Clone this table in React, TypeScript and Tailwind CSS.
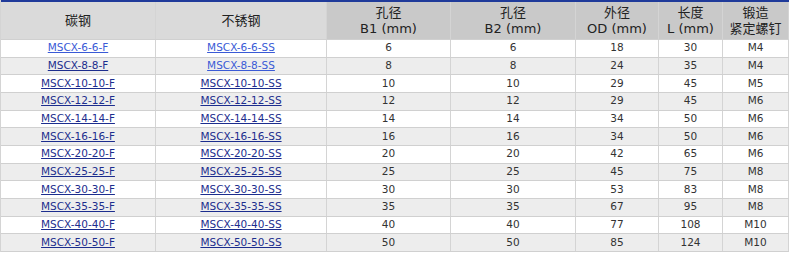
import React from "react";

type Row = {
  f: string;
  ss: string;
  b1: string;
  b2: string;
  od: string;
  l: string;
  m: string;
  fLight?: boolean;
  ssLight?: boolean;
};

const rows: Row[] = [
  { f: "MSCX-6-6-F", ss: "MSCX-6-6-SS", b1: "6", b2: "6", od: "18", l: "30", m: "M4", fLight: true, ssLight: true },
  { f: "MSCX-8-8-F", ss: "MSCX-8-8-SS", b1: "8", b2: "8", od: "24", l: "35", m: "M4", ssLight: true },
  { f: "MSCX-10-10-F", ss: "MSCX-10-10-SS", b1: "10", b2: "10", od: "29", l: "45", m: "M5" },
  { f: "MSCX-12-12-F", ss: "MSCX-12-12-SS", b1: "12", b2: "12", od: "29", l: "45", m: "M6" },
  { f: "MSCX-14-14-F", ss: "MSCX-14-14-SS", b1: "14", b2: "14", od: "34", l: "50", m: "M6" },
  { f: "MSCX-16-16-F", ss: "MSCX-16-16-SS", b1: "16", b2: "16", od: "34", l: "50", m: "M6" },
  { f: "MSCX-20-20-F", ss: "MSCX-20-20-SS", b1: "20", b2: "20", od: "42", l: "65", m: "M6" },
  { f: "MSCX-25-25-F", ss: "MSCX-25-25-SS", b1: "25", b2: "25", od: "45", l: "75", m: "M8" },
  { f: "MSCX-30-30-F", ss: "MSCX-30-30-SS", b1: "30", b2: "30", od: "53", l: "83", m: "M8" },
  { f: "MSCX-35-35-F", ss: "MSCX-35-35-SS", b1: "35", b2: "35", od: "67", l: "95", m: "M8" },
  { f: "MSCX-40-40-F", ss: "MSCX-40-40-SS", b1: "40", b2: "40", od: "77", l: "108", m: "M10" },
  { f: "MSCX-50-50-F", ss: "MSCX-50-50-SS", b1: "50", b2: "50", od: "85", l: "124", m: "M10" },
];

const cols = "grid grid-cols-[155px_171px_124px_125px_83px_64px_66px]";

function HeadCell({ lines, light }: { lines: string[]; light?: boolean }) {
  return (
    <div
      className={`flex flex-col items-center justify-center border-r border-[#d4d4d4] leading-[16px] text-[13px] text-[#222] ${
        light ? "bg-[#dadada]" : "bg-[#c9c9c9]"
      }`}
    >
      {lines.map((t) => (
        <span key={t}>{t}</span>
      ))}
    </div>
  );
}

function Cell({ children }: { children: React.ReactNode }) {
  return (
    <div className="flex items-center justify-center border-r border-[#d4d4d4]">{children}</div>
  );
}

export default function App() {
  return (
    <div
      className="w-[790px] h-[257px] bg-white"
      style={{ fontFamily: '"DejaVu Sans", Verdana, "Noto Sans CJK SC", sans-serif' }}
    >
      <div className="w-[789px] border-l border-[#d4d4d4]">
        <div className={`${cols} h-[40px] border-t-2 border-[#1f3a9a] border-b border-b-[#d0d0d0]`}>
          <HeadCell lines={["碳钢"]} light />
          <HeadCell lines={["不锈钢"]} light />
          <HeadCell lines={["孔径", "B1 (mm)"]} />
          <HeadCell lines={["孔径", "B2 (mm)"]} />
          <HeadCell lines={["外径", "OD (mm)"]} />
          <HeadCell lines={["长度", "L (mm)"]} />
          <HeadCell lines={["锻造", "紧定螺钉"]} />
        </div>
        {rows.map((r, i) => (
          <div
            key={r.f}
            className={`${cols} h-[17.67px] border-b border-[#d0d0d0] text-[10.5px] text-[#333] ${
              i % 2 === 1 ? "bg-[#ededed]" : "bg-white"
            }`}
          >
            <Cell>
              <a className={`underline ${r.fLight ? "text-[#3a5ad6]" : "text-[#1c2d8e]"}`}>{r.f}</a>
            </Cell>
            <Cell>
              <a className={`underline ${r.ssLight ? "text-[#3a5ad6]" : "text-[#1c2d8e]"}`}>{r.ss}</a>
            </Cell>
            <Cell>{r.b1}</Cell>
            <Cell>{r.b2}</Cell>
            <Cell>{r.od}</Cell>
            <Cell>{r.l}</Cell>
            <Cell>{r.m}</Cell>
          </div>
        ))}
      </div>
    </div>
  );
}
